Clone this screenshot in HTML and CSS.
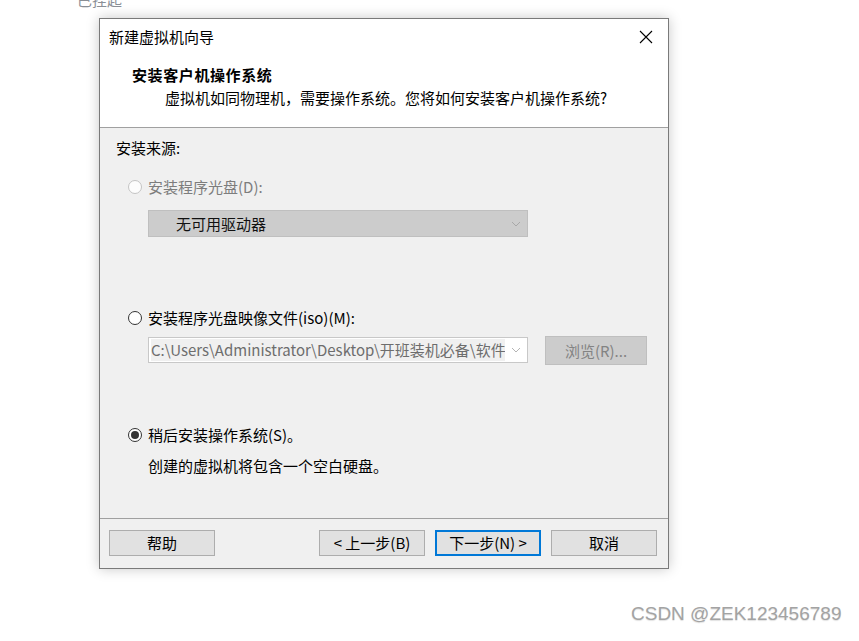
FILE: index.html
```html
<!DOCTYPE html>
<html lang="zh-CN">
<head>
<meta charset="utf-8">
<title>新建虚拟机向导</title>
<link rel="stylesheet" href="styles.css">
</head>
<body>
<div class="page">
  <div class="suspended">已挂起</div>
  <div class="dialog">
    <div class="titlebar">
      <span class="title">新建虚拟机向导</span>
      <svg class="close" width="14" height="14" viewBox="0 0 14 14"><path d="M1 1 L13 13 M13 1 L1 13" stroke="#000" stroke-width="1.1" fill="none"/></svg>
    </div>
    <div class="header">
      <div class="h-title">安装客户机操作系统</div>
      <div class="h-sub">虚拟机如同物理机，需要操作系统。您将如何安装客户机操作系统?</div>
    </div>
    <div class="body">
      <div class="label">安装来源:</div>
      <div class="opt opt-1 disabled"><span class="radio"></span><span>安装程序光盘(D):</span></div>
      <div class="select disabled-select">
        <span class="sel-text">无可用驱动器</span>
        <svg class="chev" width="10" height="6" viewBox="0 0 10 6"><path d="M1 1 L5 5 L9 1" stroke="#a8a8a8" fill="none"/></svg>
      </div>
      <div class="opt opt-2"><span class="radio"></span><span>安装程序光盘映像文件(iso)(M):</span></div>
      <div class="iso-row">
        <div class="select combo">
          <span class="combo-text">C:\Users\Administrator\Desktop\开班装机必备\软件\v</span>
          <svg class="chev" width="10" height="6" viewBox="0 0 10 6"><path d="M1 1 L5 5 L9 1" stroke="#b4b4b4" fill="none"/></svg>
        </div>
        <div class="btn btn-disabled">浏览(R)...</div>
      </div>
      <div class="opt opt-3"><span class="radio checked"></span><span>稍后安装操作系统(S)。</span></div>
      <div class="note">创建的虚拟机将包含一个空白硬盘。</div>
    </div>
    <div class="footer">
      <div class="btn">帮助</div>
      <div class="spacer"></div>
      <div class="btn">&lt; 上一步(B)</div>
      <div class="btn btn-default">下一步(N) &gt;</div>
      <div class="btn">取消</div>
    </div>
  </div>
  <div class="watermark">CSDN @ZEK123456789</div>
</div>
</body>
</html>
```

FILE: styles.css
```css
html, body {
  margin: 0;
  padding: 0;
  background: #ffffff;
}
body {
  font-family: "Noto Sans CJK SC", "Noto Sans", sans-serif;
  font-size: 15px;
  color: #000;
  width: 859px;
  height: 641px;
  overflow: hidden;
}
.page {
  position: relative;
  width: 859px;
  height: 641px;
}
.suspended {
  margin: -10px 0 0 77px;
  line-height: 20px;
  height: 20px;
  font-size: 15px;
  color: #8a8f96;
}
.dialog {
  margin: 8px 0 0 99px;
  width: 568px;
  height: 549px;
  border: 1px solid #7a7a7a;
  background: #f0f0f0;
  box-shadow: 0 0 12px rgba(0, 0, 0, 0.22);
  display: flex;
  flex-direction: column;
}
.titlebar {
  height: 38px;
  box-sizing: border-box;
  background: #fff;
  display: flex;
  align-items: center;
  justify-content: space-between;
  padding: 0 15px 3px 9px;
}
.title {
  line-height: 20px;
}
.close {
  display: block;
}
.header {
  height: 71px;
  background: #fff;
  border-bottom: 1px solid #a0a0a0;
  padding: 8px 0 0 32px;
  box-sizing: border-box;
}
.h-title {
  font-weight: bold;
  line-height: 20px;
  letter-spacing: 0.6px;
}
.h-sub {
  margin: 3px 0 0 33px;
  line-height: 20px;
}
.body {
  height: 391px;
  border-bottom: 1px solid #a0a0a0;
  padding: 10px 0 0 16px;
  box-sizing: border-box;
  display: flex;
  flex-direction: column;
  align-items: flex-start;
}
.label {
  line-height: 20px;
}
.opt {
  display: flex;
  align-items: center;
  gap: 6px;
  line-height: 20px;
  margin-left: 12px;
}
.opt-1 { margin-top: 19px; }
.opt-2 { margin-top: 71px; }
.opt-3 { margin-top: 60px; }
.disabled {
  color: #7d7d7d;
}
.radio {
  width: 12px;
  height: 12px;
  border-radius: 50%;
  border: 1px solid #333;
  background: #fff;
  display: flex;
  align-items: center;
  justify-content: center;
  box-sizing: content-box;
}
.disabled .radio {
  border-color: #c4c4c4;
  background: #fdfdfd;
}
.radio.checked::after {
  content: "";
  width: 8px;
  height: 8px;
  border-radius: 50%;
  background: #333;
}
.select {
  width: 380px;
  height: 27px;
  box-sizing: border-box;
  margin-left: 32px;
  display: flex;
  align-items: center;
  justify-content: space-between;
  padding-right: 6px;
}
.disabled-select {
  margin-top: 13px;
  background: #cccccc;
  border: 1px solid #bfbfbf;
}
.sel-text {
  margin-left: 27px;
  line-height: 20px;
  color: #111;
}
.chev {
  display: block;
}
.iso-row {
  margin-top: 8px;
  display: flex;
  align-items: flex-start;
  gap: 17px;
  margin-left: 32px;
}
.combo {
  margin-left: 0;
  margin-top: 1px;
  height: 26px;
  background: #fff;
  border: 1px solid #c8c8c8;
  padding-left: 2px;
}
.combo-text {
  background: #f0f0f0;
  color: #6d6d6d;
  line-height: 22px;
  height: 22px;
  width: 354px;
  overflow: hidden;
  white-space: nowrap;
  font-size: 15px;
}
.btn {
  width: 106px;
  height: 26px;
  box-sizing: border-box;
  background: #e1e1e1;
  border: 1px solid #adadad;
  display: flex;
  align-items: center;
  justify-content: center;
  line-height: 20px;
  font-size: 15px;
}
.btn-disabled {
  width: 102px;
  height: 29px;
  background: #cccccc;
  border-color: #bfbfbf;
  color: #838383;
}
.btn-default {
  border: 2px solid #0078d7;
}
.note {
  margin: 11px 0 0 32px;
  line-height: 20px;
}
.footer {
  flex: 1;
  display: flex;
  align-items: flex-start;
  padding: 11px 11px 0 9px;
  gap: 10px;
}
.spacer {
  flex: 1;
}
.watermark {
  position: absolute;
  left: 631px;
  top: 613px;
  font-family: "Liberation Sans", Arial, sans-serif;
  font-size: 19px;
  line-height: 22px;
  color: #a3a3a3;
  text-shadow: 0 1px 1px rgba(0, 0, 0, 0.12);
}
```
